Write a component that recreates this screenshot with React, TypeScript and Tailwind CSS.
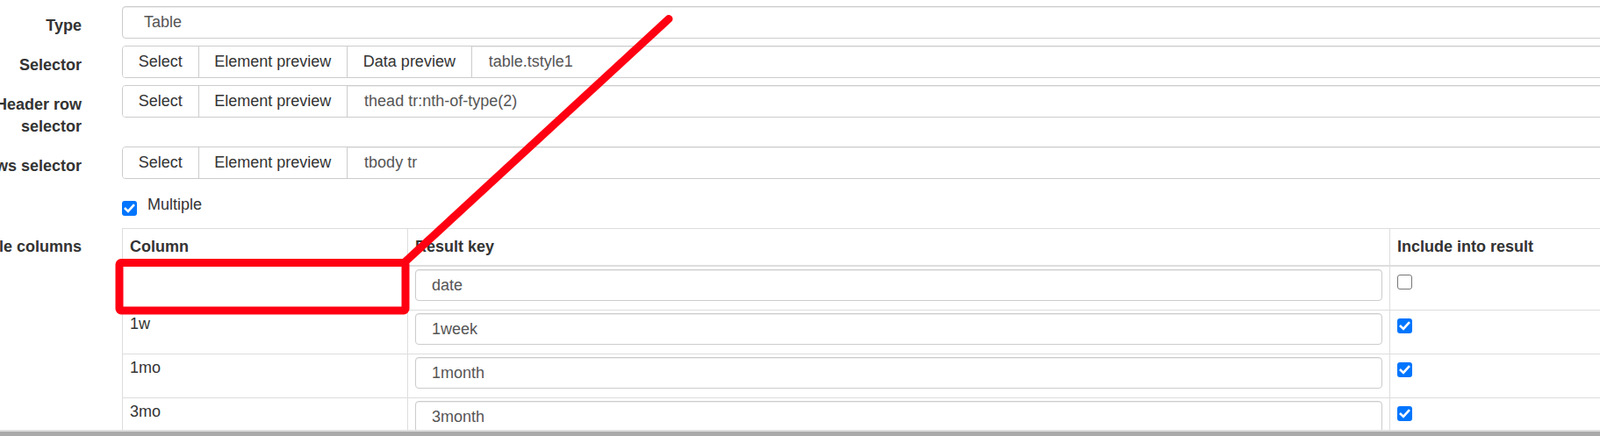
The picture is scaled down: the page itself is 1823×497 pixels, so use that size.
import React from "react";

const inputCls =
  "rounded-[4px] border border-[#ccc] bg-white text-[#555] shadow-[inset_0_1px_1px_rgba(0,0,0,0.075)] outline-none";

function FormRow({ label, children }: { label?: string; children: React.ReactNode }) {
  return (
    <div className="flex items-start">
      <label className="w-[143px] shrink-0 py-[10px] text-right font-bold leading-[25px] text-[#333]">
        {label}
      </label>
      <div className="ml-[46px] w-[1740px] shrink-0">{children}</div>
    </div>
  );
}

function SelectorGroup({ buttons, value }: { buttons: string[]; value: string }) {
  return (
    <div className={`flex h-[37px] items-stretch overflow-hidden ${inputCls}`}>
      {buttons.map((b) => (
        <button
          key={b}
          type="button"
          className="shrink-0 border-r border-[#ccc] bg-white px-[17.75px] text-[#333]"
        >
          {b}
        </button>
      ))}
      <input
        readOnly
        value={value}
        className="min-w-0 flex-1 bg-transparent pl-[19px] text-[#555] outline-none"
      />
    </div>
  );
}

function Check({ checked, className = "" }: { checked: boolean; className?: string }) {
  if (!checked) {
    return (
      <span
        className={`block h-[17px] w-[17px] shrink-0 rounded-[3px] border border-[#767676] bg-white ${className}`}
      />
    );
  }
  return (
    <span className={`block h-[17px] w-[17px] shrink-0 rounded-[3px] bg-[#0075ff] ${className}`}>
      <svg width="17" height="17" viewBox="0 0 17 17">
        <path
          d="M3.9 8.9 L7 11.9 L13.1 5.2"
          fill="none"
          stroke="white"
          strokeWidth="2.6"
          strokeLinecap="square"
        />
      </svg>
    </span>
  );
}

const rows = [
  { col: "", key: "date", include: false },
  { col: "1w", key: "1week", include: true },
  { col: "1mo", key: "1month", include: true },
  { col: "3mo", key: "3month", include: true },
];

export default function App() {
  return (
    <div className="relative h-[497px] w-full overflow-hidden bg-white font-['Liberation_Sans',Arial,sans-serif] text-[18px] text-[#333]">
      <div className="-ml-[50px] pt-[7px]">
        <FormRow label="Type">
          <div className={`flex h-[37px] items-center pl-[24px] ${inputCls}`}>Table</div>
        </FormRow>
        <FormRow label="Selector">
          <SelectorGroup buttons={["Select", "Element preview", "Data preview"]} value="table.tstyle1" />
        </FormRow>
        <FormRow label="Header row selector">
          <SelectorGroup buttons={["Select", "Element preview"]} value="thead tr:nth-of-type(2)" />
        </FormRow>
        <FormRow label="Rows selector">
          <SelectorGroup buttons={["Select", "Element preview"]} value="tbody tr" />
        </FormRow>

        <div className="flex items-start pb-[14px] pt-[9px]">
          <div className="w-[143px] shrink-0" />
          <div className="ml-[46px] flex items-start gap-[12px]">
            <Check checked className="mt-[7.5px]" />
            <span className="leading-[25px] text-[#333]">Multiple</span>
          </div>
        </div>

        <div className="flex items-start">
          <label className="w-[143px] shrink-0 pt-[9px] text-right font-bold leading-[25px] text-[#333]">
            Table columns
          </label>
          <table className="ml-[46px] w-[1744px] shrink-0 table-fixed border-separate border-spacing-0 border-l border-t border-[#ddd]">
            <colgroup>
              <col className="w-[325px]" />
              <col className="w-[1119px]" />
              <col />
            </colgroup>
            <thead>
              <tr>
                {["Column", "Result key", "Include into result"].map((h) => (
                  <th
                    key={h}
                    className="border-b-2 border-r border-[#ddd] p-[8px] text-left font-bold leading-[25px] text-[#333]"
                  >
                    {h}
                  </th>
                ))}
              </tr>
            </thead>
            <tbody>
              {rows.map((r, i) => (
                <tr key={i}>
                  <td className="border-b border-r border-[#ddd] px-[8px] pb-[10px] pt-[3px] align-top leading-[25px]">
                    {r.col}
                  </td>
                  <td className="border-b border-r border-[#ddd] px-[8px] pb-[10px] pt-[3px] align-top">
                    <input
                      readOnly
                      value={r.key}
                      className={`block h-[36px] w-full pl-[18px] ${inputCls}`}
                    />
                  </td>
                  <td className="border-b border-r border-[#ddd] px-[8px] pb-[10px] pt-[3px] align-top">
                    <Check checked={r.include} className="mt-[6px]" />
                  </td>
                </tr>
              ))}
            </tbody>
          </table>
        </div>
      </div>

      {/* annotation drawn over the page */}
      <svg
        className="pointer-events-none absolute left-0 top-0"
        width="1823"
        height="497"
        viewBox="0 0 1823 497"
      >
        <rect
          x="136"
          y="299.5"
          width="326"
          height="54.5"
          rx="2"
          fill="none"
          stroke="#ff0012"
          strokeWidth="9"
          strokeLinejoin="round"
        />
        <line
          x1="461"
          y1="299"
          x2="762"
          y2="21.5"
          stroke="#ff0012"
          strokeWidth="9"
          strokeLinecap="round"
        />
      </svg>

      <div className="absolute bottom-0 left-0 h-[7px] w-full border-t-2 border-[#dedede] bg-[#aaa]" />
    </div>
  );
}
